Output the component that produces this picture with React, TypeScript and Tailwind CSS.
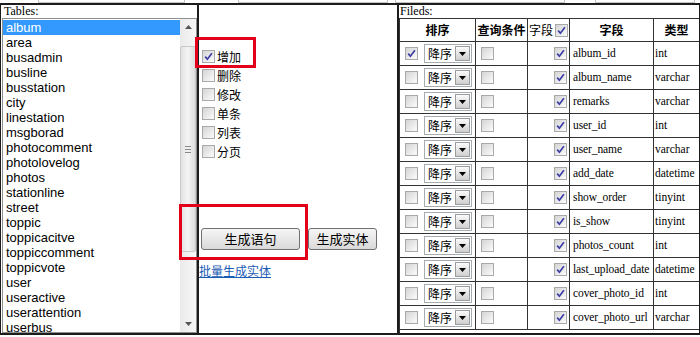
import React from "react";

const TABLES = [
  "album", "area", "busadmin", "busline", "busstation", "city", "linestation",
  "msgborad", "photocomment", "photolovelog", "photos", "stationline", "street",
  "toppic", "toppicacitve", "toppiccomment", "toppicvote", "user", "useractive",
  "userattention", "userbus",
];

const FIELDS: [string, string][] = [
  ["album_id", "int"],
  ["album_name", "varchar"],
  ["remarks", "varchar"],
  ["user_id", "int"],
  ["user_name", "varchar"],
  ["add_date", "datetime"],
  ["show_order", "tinyint"],
  ["is_show", "tinyint"],
  ["photos_count", "int"],
  ["last_upload_date", "datetime"],
  ["cover_photo_id", "int"],
  ["cover_photo_url", "varchar"],
];

const OPTIONS = ["增加", "删除", "修改", "单条", "列表", "分页"];

const cjk = "font-['Noto_Sans_CJK_SC','Noto_Sans',sans-serif]";
const serif = "font-['Liberation_Serif','Times_New_Roman',serif]";

function Check({ checked }: { checked?: boolean }) {
  return (
    <span className="inline-flex h-[13px] w-[13px] shrink-0 items-center justify-center border border-[#a9a9a9] bg-linear-to-br from-[#d4d4d4] to-[#fcfcfc]">
      {checked && (
        <svg width="9" height="9" viewBox="0 0 9 9">
          <path d="M1.2 4.6 L3.4 7.2 L7.9 1.2" fill="none" stroke="#3d3da6" strokeWidth="1.7" />
        </svg>
      )}
    </span>
  );
}

function SortSelect() {
  return (
    <span className="flex h-[19px] w-[48px] items-center border border-[#a5acb2] bg-white">
      <span className={`flex-1 pl-[3px] text-[12px] leading-none text-black ${cjk}`}>降序</span>
      <span className="mr-px flex h-[15px] w-[15px] items-center justify-center border border-[#9c9c9c] bg-linear-to-b from-[#fbfbfb] to-[#cfcfcf]">
        <svg width="7" height="4" viewBox="0 0 7 4">
          <path d="M0 0h7L3.5 4z" fill="#000" />
        </svg>
      </span>
    </span>
  );
}

function Scrollbar() {
  return (
    <div className="flex w-[16px] flex-col bg-linear-to-r from-[#eaeaea] to-[#f7f7f7]">
      <div className="flex h-[16px] items-center justify-center">
        <svg width="7" height="4" viewBox="0 0 7 4">
          <path d="M0 4h7L3.5 0z" fill="#555" />
        </svg>
      </div>
      <div className="mt-[11px] flex h-[206px] items-center justify-center rounded-[2px] border border-[#c8c8c8] bg-linear-to-r from-[#e2e2e2] via-[#f4f4f4] to-[#dcdcdc]">
        <div className="flex flex-col gap-[2px]">
          <span className="h-px w-[6px] bg-[#888]" />
          <span className="h-px w-[6px] bg-[#888]" />
          <span className="h-px w-[6px] bg-[#888]" />
        </div>
      </div>
      <div className="flex-1" />
      <div className="flex h-[16px] items-center justify-center">
        <svg width="7" height="4" viewBox="0 0 7 4">
          <path d="M0 0h7L3.5 4z" fill="#555" />
        </svg>
      </div>
    </div>
  );
}

export default function App() {
  return (
    <div className="relative h-[337px] w-[700px] overflow-hidden bg-white">
      {/* cut-off inputs above */}
      <div className="flex h-[3px]">
        <div className="ml-[38px] w-[147px] border-x border-b border-[#c4c4c4]" />
        <div className="ml-[53px] w-[150px] border-x border-b border-[#c4c4c4]" />
        <div className="ml-[7px] w-[170px] border-x border-b border-[#c4c4c4]" />
        <div className="ml-[30px] w-[100px] border-x border-b border-[#c4c4c4]" />
      </div>

      <div className="flex h-[332px] border-x border-y-2 border-[#1c1c1c]">
        {/* tables */}
        <div className="flex w-[196px] flex-col">
          <div className={`h-[13px] pl-[3px] text-[12px] leading-[13px] text-black ${serif}`}>Tables:</div>
          <div className="ml-px flex min-h-0 flex-1 overflow-hidden border border-[#8e8f8f] bg-white">
            <div className="flex-1 pt-px font-['Liberation_Sans',Arial,sans-serif] text-[13px] leading-[15px]">
              {TABLES.map((t, i) => (
                <div
                  key={t}
                  className={i === 0 ? "bg-[#3399ff] pl-[3px] text-white" : "pl-[3px] text-black"}
                >
                  {t}
                </div>
              ))}
            </div>
            <Scrollbar />
          </div>
        </div>

        {/* options */}
        <div className="flex w-[200px] flex-col border-l-2 border-[#1c1c1c]">
          <div className="flex flex-col pl-[3px] pt-[42px]">
            {OPTIONS.map((o, i) => (
              <label key={o} className="flex h-[19px] items-center gap-[2px]">
                <Check checked={i === 0} />
                <span className={`text-[12px] leading-none text-black ${cjk}`}>{o}</span>
              </label>
            ))}
          </div>
          <div className={`mt-[67px] flex gap-[8px] pl-[2px] text-[13px] text-black ${cjk}`}>
            <button className="flex h-[22px] w-[99px] items-center justify-center rounded-[3px] border border-[#707070] bg-linear-to-b from-[#f6f6f6] to-[#d9d9d9]">
              生成语句
            </button>
            <button className="flex h-[22px] w-[69px] items-center justify-center rounded-[3px] border border-[#707070] bg-linear-to-b from-[#f6f6f6] to-[#d9d9d9]">
              生成实体
            </button>
          </div>
          <a className={`mt-[13px] w-fit text-[12px] leading-[15px] text-[#1a5bb5] underline ${cjk}`}>批量生成实体</a>
        </div>

        {/* fields */}
        <div className="flex min-w-0 flex-1 flex-col overflow-hidden border-l-2 border-[#1c1c1c]">
          <div className={`h-[13px] pl-px text-[12px] leading-[13px] text-black ${serif}`}>Fileds:</div>
          <table className="w-[300px] table-fixed border-collapse border border-[#333]">
            <colgroup>
              <col className="w-[76px]" />
              <col className="w-[52px]" />
              <col className="w-[42px]" />
              <col className="w-[84px]" />
              <col className="w-[46px]" />
            </colgroup>
            <thead>
              <tr className={`h-[23px] text-[12px] text-black ${cjk}`}>
                <th className="border border-[#333] p-0 text-center font-bold">排序</th>
                <th className="border border-[#333] p-0 text-center font-bold whitespace-nowrap">查询条件</th>
                <th className="border border-[#333] p-0 font-normal">
                  <span className="flex items-center justify-center gap-[2px]">
                    字段
                    <Check checked />
                  </span>
                </th>
                <th className="border border-[#333] p-0 text-center font-bold">字段</th>
                <th className="border border-[#333] p-0 text-center font-bold">类型</th>
              </tr>
            </thead>
            <tbody>
              {FIELDS.map(([name, type], i) => (
                <tr key={name} className="h-[24px]">
                  <td className="border border-[#333] p-0">
                    <span className="flex items-center gap-[6px] pl-[5px]">
                      <Check checked={i === 0} />
                      <SortSelect />
                    </span>
                  </td>
                  <td className="border border-[#333] p-0">
                    <span className="flex pl-[5px]">
                      <Check />
                    </span>
                  </td>
                  <td className="border border-[#333] p-0">
                    <span className="flex justify-end pr-[2px]">
                      <Check checked />
                    </span>
                  </td>
                  <td className={`border border-[#333] p-0 pl-[3px] text-[11.5px] tracking-[-0.1px] whitespace-nowrap text-black ${serif}`}>
                    {name}
                  </td>
                  <td className={`border border-[#333] p-0 pl-px text-[11.5px] whitespace-nowrap text-black ${serif}`}>
                    {type}
                  </td>
                </tr>
              ))}
              <tr className="h-[24px]">
                <td className="border border-[#333] p-0" colSpan={5} />
              </tr>
            </tbody>
          </table>
        </div>
      </div>

      {/* red highlight boxes */}
      <div className="absolute left-[195px] top-[37px] h-[31px] w-[61px] border-[3px] border-[#e3001b]" />
      <div className="absolute left-[179px] top-[204px] h-[56px] w-[129px] border-[3px] border-[#e3001b]" />
    </div>
  );
}
